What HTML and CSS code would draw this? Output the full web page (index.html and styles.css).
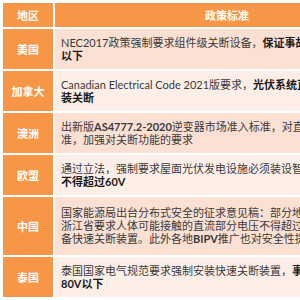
FILE: index.html
```html
<!DOCTYPE html>
<html lang="zh">
<head>
<meta charset="utf-8">
<link rel="stylesheet" href="styles.css">
</head>
<body>
<div class="table">
  <div class="cell head region">地区</div>
  <div class="cell head">政策标准</div>

  <div class="cell region">美国</div>
  <div class="cell policy band">NEC2017政策强制要求组件级关断设备，<b>保证事故发生时组件电压降至80V</b><br><b>以下</b></div>

  <div class="cell region">加拿大</div>
  <div class="cell policy">Canadian Electrical Code 2021版要求，<b>光伏系统直流侧须安</b><br><b>装关断</b></div>

  <div class="cell region">澳洲</div>
  <div class="cell policy band">出新版<b class="lat">AS4777.2-2020</b>逆变器市场准入标准，对直流侧标<br>准，加强对关断功能的要求</div>

  <div class="cell region">欧盟</div>
  <div class="cell policy">通过立法，强制要求屋面光伏发电设施必须装设智能关断，电压<br><b>不得超过60V</b></div>

  <div class="cell region">中国</div>
  <div class="cell policy band tall">国家能源局出台分布式安全的征求意见稿：部分地区如<br>浙江省要求人体可能接触的直流部分电压不得超过安全值，须配<br>备快速关断装置。此外各地<b class="lat">BIPV</b>推广也对安全性提出要求</div>

  <div class="cell region">泰国</div>
  <div class="cell policy">泰国国家电气规范要求强制安装快速关断装置，<b>事故时电压降至</b><br><b>80V以下</b></div>
</div>
</body>
</html>
```
FILE: styles.css
```css
html, body {
  margin: 0;
  padding: 0;
  overflow: hidden;
  background: #ffffff;
}

.table {
  display: grid;
  grid-template-columns: 50px 344px;
  gap: 2px;
  padding: 3px;
  width: max-content;
  font-family: "Lato", "Noto Sans CJK SC", sans-serif;
  font-size: 11px;
  line-height: 13px;
}

.cell {
  display: flex;
  flex-direction: column;
  justify-content: center;
  white-space: nowrap;
  overflow: hidden;
}

.head {
  background: #f79646;
  color: #ffffff;
  font-weight: bold;
  height: 24px;
  text-align: center;
  font-size: 11px;
}

.region {
  background: #f79646;
  color: #ffffff;
  font-weight: bold;
  text-align: center;
}

.policy {
  display: block;
  background: #fdefe8;
  color: #3a3a3a;
  padding: 7px 6px;
}

.policy.band {
  background: #fbe0d3;
}

.policy.tall {
  padding: 9px 6px 10px;
}

.policy b {
  color: #1a1a1a;
  font-weight: bold;
}

.policy b.lat {
  color: #3a3a3a;
}
```
